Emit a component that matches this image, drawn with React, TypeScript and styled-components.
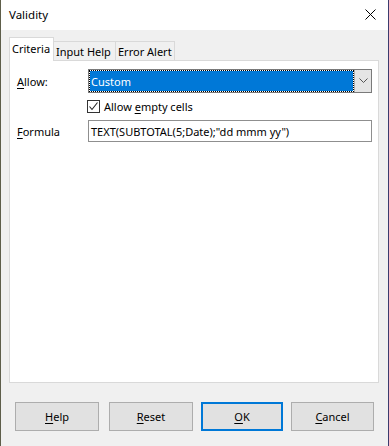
import React from "react";
import styled, { createGlobalStyle } from "styled-components";

const Global = createGlobalStyle`
  html, body { margin: 0; padding: 0; background: #f0f0f0; }
  body { font-family: "Noto Sans", "Open Sans", sans-serif; font-size: 11px; color: #000; }
  * { box-sizing: border-box; }
`;

const Window = styled.div`
  width: 389px;
  height: 446px;
  display: flex;
  flex-direction: column;
  background: #f0f0f0;
  border-left: 1px solid #5e5e4a;
  border-right: 1px solid #3b3b6e;
  overflow: hidden;
`;

const TitleBar = styled.div`
  height: 30px;
  flex: none;
  background: #ffffff;
  display: flex;
  align-items: center;
  justify-content: space-between;
  padding: 0 4px 0 8px;
`;

const Title = styled.span`
  font-size: 11.5px;
  color: #000;
  margin-top: -1px;
`;

const CloseBox = styled.div`
  width: 28px;
  height: 28px;
  display: flex;
  align-items: center;
  justify-content: center;
  margin-top: -2px;
`;

const Body = styled.div`
  flex: 1;
  display: flex;
  flex-direction: column;
  padding: 8px 9px 0 8px;
`;

const TabRow = styled.div`
  display: flex;
  align-items: flex-end;
  height: 23px;
  position: relative;
  z-index: 1;
  margin-bottom: -1px;
`;

const Tab = styled.div<{ $active?: boolean; $w: number }>`
  width: ${(p) => p.$w}px;
  height: ${(p) => (p.$active ? 24 : 20)}px;
  padding: 0 0 ${(p) => (p.$active ? 3 : 0)}px 2px;
  background: ${(p) => (p.$active ? "#ffffff" : "#f0f0f0")};
  border: 1px solid #d9d9d9;
  border-bottom: ${(p) => (p.$active ? "none" : "1px solid #d9d9d9")};
  margin-left: ${(p) => (p.$active ? 0 : -1)}px;
  display: flex;
  align-items: center;
  white-space: nowrap;
  overflow: hidden;
`;

const Panel = styled.div`
  height: 323px;
  background: #ffffff;
  border: 1px solid #d9d9d9;
  padding: 8px 6px 0 7px;
  display: grid;
  grid-template-columns: 71px minmax(0, 1fr);
  grid-auto-rows: min-content;
  align-content: start;
  align-items: center;
`;

const Label = styled.span`
  grid-column: 1;
`;

const U = styled.span`
  text-decoration: underline;
  text-underline-offset: 2px;
`;

const Combo = styled.div`
  grid-column: 2;
  height: 24px;
  display: flex;
  border: 1px solid #7a7a7a;
  background: #fff;
`;

const ComboField = styled.div`
  flex: 1;
  background: #0078d7;
  background-clip: padding-box;
  border: 1px dotted #000;
  color: #fff;
  display: flex;
  align-items: center;
  padding-left: 1px;
`;

const ComboButton = styled.div`
  width: 17px;
  flex: none;
  background: #e5e5e5;
  border-left: 1px solid #adadad;
  display: flex;
  align-items: center;
  justify-content: center;
`;

const CheckLine = styled.div`
  grid-column: 2;
  display: flex;
  align-items: center;
  height: 14px;
  margin: 6px 0 7px -1px;
  gap: 4px;
`;

const Box = styled.div`
  width: 13px;
  height: 13px;
  flex: none;
  border: 1px solid #333;
  background: #fff;
  display: flex;
  align-items: center;
  justify-content: center;
`;

const TextInput = styled.div`
  grid-column: 2;
  height: 22px;
  border: 1px solid #8f8f8f;
  display: flex;
  align-items: center;
  padding-left: 2px;
  white-space: nowrap;
  overflow: hidden;
`;

const ButtonRow = styled.div`
  display: flex;
  padding: 19px 0 0 6px;
`;

const Button = styled.div<{ $w: number; $ml?: number; $default?: boolean }>`
  width: ${(p) => p.$w}px;
  height: 29px;
  margin-left: ${(p) => p.$ml ?? 0}px;
  background: #e1e1e1;
  border: ${(p) => (p.$default ? "2px solid #0078d7" : "1px solid #adadad")};
  display: flex;
  align-items: center;
  justify-content: center;
`;

export default function App() {
  return (
    <>
      <Global />
      <Window>
        <TitleBar>
          <Title>Validity</Title>
          <CloseBox>
            <svg width="11" height="11" viewBox="0 0 11 11">
              <path d="M0.5 0.5 L10.5 10.5 M10.5 0.5 L0.5 10.5" stroke="#000" strokeWidth="1" fill="none" />
            </svg>
          </CloseBox>
        </TitleBar>
        <Body>
          <TabRow>
            <Tab $active $w={45}>Criteria</Tab>
            <Tab $w={63}>Input Help</Tab>
            <Tab $w={60}>Error Alert</Tab>
          </TabRow>
          <Panel>
            <Label>
              <U>A</U>llow:
            </Label>
            <Combo>
              <ComboField>Custom</ComboField>
              <ComboButton>
                <svg width="9" height="6" viewBox="0 0 9 6">
                  <path d="M0.5 0.5 L4.5 4.5 L8.5 0.5" stroke="#555" strokeWidth="1" fill="none" />
                </svg>
              </ComboButton>
            </Combo>
            <CheckLine>
              <Box>
                <svg width="11" height="11" viewBox="0 0 11 11">
                  <path d="M1.5 5.5 L4 8.5 L9.5 1.5" stroke="#222" strokeWidth="1.1" fill="none" />
                </svg>
              </Box>
              <span>
                Allow <U>e</U>mpty cells
              </span>
            </CheckLine>
            <Label>
              <U>F</U>ormula
            </Label>
            <TextInput>TEXT(SUBTOTAL(5;Date);"dd mmm yy")</TextInput>
          </Panel>
          <ButtonRow>
            <Button $w={84}>
              <span>
                <U>H</U>elp
              </span>
            </Button>
            <Button $w={84} $ml={10}>
              <span>
                <U>R</U>eset
              </span>
            </Button>
            <Button $w={82} $ml={8} $default>
              <span>
                <U>O</U>K
              </span>
            </Button>
            <Button $w={83} $ml={8}>
              <span>
                <U>C</U>ancel
              </span>
            </Button>
          </ButtonRow>
        </Body>
      </Window>
    </>
  );
}
